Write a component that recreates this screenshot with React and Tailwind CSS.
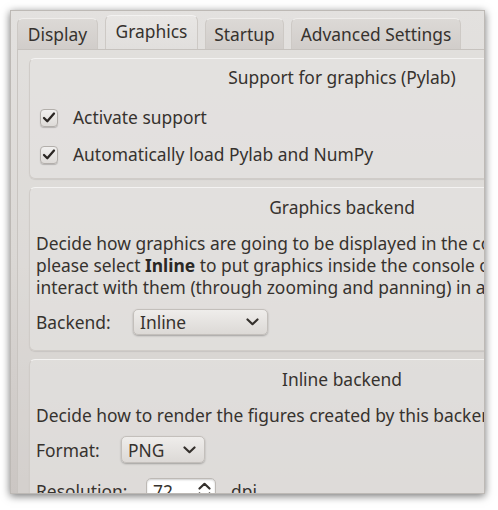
import React from "react";

const Chevron = ({ up = false }) => (
  <svg width="13" height="8" viewBox="0 0 13 8" className="block">
    <path
      d={up ? "M1.5 6.5 L6.5 1.8 L11.5 6.5" : "M1.5 1.5 L6.5 6.2 L11.5 1.5"}
      fill="none"
      stroke="#34302c"
      strokeWidth="2.2"
      strokeLinecap="round"
      strokeLinejoin="round"
    />
  </svg>
);

const Check = ({ label }) => (
  <div className="h-[37px] flex items-center pl-[4px] gap-[15px]">
    <div className="w-[18px] h-[18px] rounded-[4px] border border-[#b3afab] bg-gradient-to-b from-[#f1f0ef] to-[#dedbd8] shadow-[0_1px_1px_rgba(0,0,0,0.2)] flex items-center justify-center">
      <svg width="14" height="13" viewBox="0 0 14 13">
        <path d="M2 7 L5.3 10.3 L12 2.5" fill="none" stroke="#2b2724" strokeWidth="2.3" strokeLinecap="round" strokeLinejoin="round" />
      </svg>
    </div>
    <span>{label}</span>
  </div>
);

const Select = ({ value, width }) => (
  <div
    className={`${width} h-[26px] rounded-[5px] border border-[#c3bfbb] bg-gradient-to-b from-[#efedeb] to-[#dcd9d6] shadow-[0_1px_2px_rgba(0,0,0,0.28)] flex items-center justify-between pl-[6px] pr-[8px]`}
  >
    <span>{value}</span>
    <Chevron />
  </div>
);

const Group = ({ title, children, className = "" }) => (
  <div
    className={`w-[620px] rounded-[6px] border border-[#d0ccc8] border-t-[#f4f3f2] bg-[#e5e3e1]/60 shadow-[0_1px_1px_rgba(0,0,0,0.08)] pl-[6px] pt-[7px] ${className}`}
  >
    <div className="h-[22px] leading-[22px] text-center">{title}</div>
    {children}
  </div>
);

export default function App() {
  return (
    <div
      className="w-[498px] h-[510px] bg-white pt-[10px] pl-[10px] text-[17.4px] text-[#36322e]"
      style={{ fontFamily: '"Noto Sans", "Open Sans", sans-serif' }}
    >
      <div className="w-[475px] h-[484px] overflow-hidden bg-gradient-to-b from-[#e3e1df] via-[#dbd8d5] to-[#cbc6c3] shadow-[0_2px_8px_rgba(0,0,0,0.55)] border border-[#bdb9b5]">
        <div className="pl-[6px] pt-[4px]">
          <div className="flex items-end gap-[7px] h-[34px]">
            <div className="w-[81px] h-[31px] rounded-t-[6px] border border-b-0 border-[#cdc9c5] border-t-[#efedeb] bg-gradient-to-b from-[#dcd9d6] to-[#d1cdca] flex items-center justify-center">
              Display
            </div>
            <div className="w-[93px] h-[34px] rounded-t-[6px] border border-b-0 border-[#cdc9c5] border-t-[#f3f2f1] bg-gradient-to-b from-[#e8e6e4] to-[#e1dfdd] flex items-center justify-center pb-[3px]">
              Graphics
            </div>
            <div className="w-[79px] h-[31px] rounded-t-[6px] border border-b-0 border-[#cdc9c5] border-t-[#efedeb] bg-gradient-to-b from-[#dcd9d6] to-[#d1cdca] flex items-center justify-center">
              Startup
            </div>
            <div className="w-[170px] h-[31px] rounded-t-[6px] border border-b-0 border-[#cdc9c5] border-t-[#efedeb] bg-gradient-to-b from-[#dcd9d6] to-[#d1cdca] flex items-center justify-center">
              Advanced Settings
            </div>
          </div>
          <div className="w-[660px] h-[460px] border-t border-l border-[#c9c5c1] border-t-[#c6c2be] bg-[#e1dfdd]/40 pt-[8px] pl-[11px] flex flex-col gap-[8px]">
            <Group title="Support for graphics (Pylab)" className="pb-[5px]">
              <div className="h-[11px]" />
              <Check label="Activate support" />
              <Check label="Automatically load Pylab and NumPy" />
            </Group>
            <Group title="Graphics backend" className="pb-[15px] pt-[8px]">
              <div className="mt-[14px] leading-[22px] whitespace-nowrap">
                <div>Decide how graphics are going to be displayed in the console. If unsure,</div>
                <div>
                  please select <b className="font-bold text-[#2a2724]">Inline</b> to put graphics inside the console or
                </div>
                <div>interact with them (through zooming and panning) in a separate window.</div>
              </div>
              <div className="mt-[11px] flex items-center">
                <span className="w-[97px]">Backend:</span>
                <Select value="Inline" width="w-[135px]" />
              </div>
            </Group>
            <Group title="Inline backend" className="pt-[8px]">
              <div className="mt-[14px] leading-[22px] whitespace-nowrap">
                Decide how to render the figures created by this backend
              </div>
              <div className="mt-[10px] flex items-center">
                <span className="w-[85px]">Format:</span>
                <Select value="PNG" width="w-[84px] h-[27px]" />
              </div>
              <div className="mt-[15px] flex items-center">
                <span className="w-[110px]">Resolution:</span>
                <div className="w-[70px] h-[26px] rounded-[5px] border border-[#bdb9b5] bg-white shadow-[inset_0_1px_2px_rgba(0,0,0,0.2)] flex items-center justify-between pl-[6px] pr-[4px]">
                  <span>72</span>
                  <div className="flex flex-col items-center gap-[2px]">
                    <Chevron up />
                    <Chevron />
                  </div>
                </div>
                <span className="ml-[15px]">dpi</span>
              </div>
            </Group>
          </div>
        </div>
      </div>
    </div>
  );
}
